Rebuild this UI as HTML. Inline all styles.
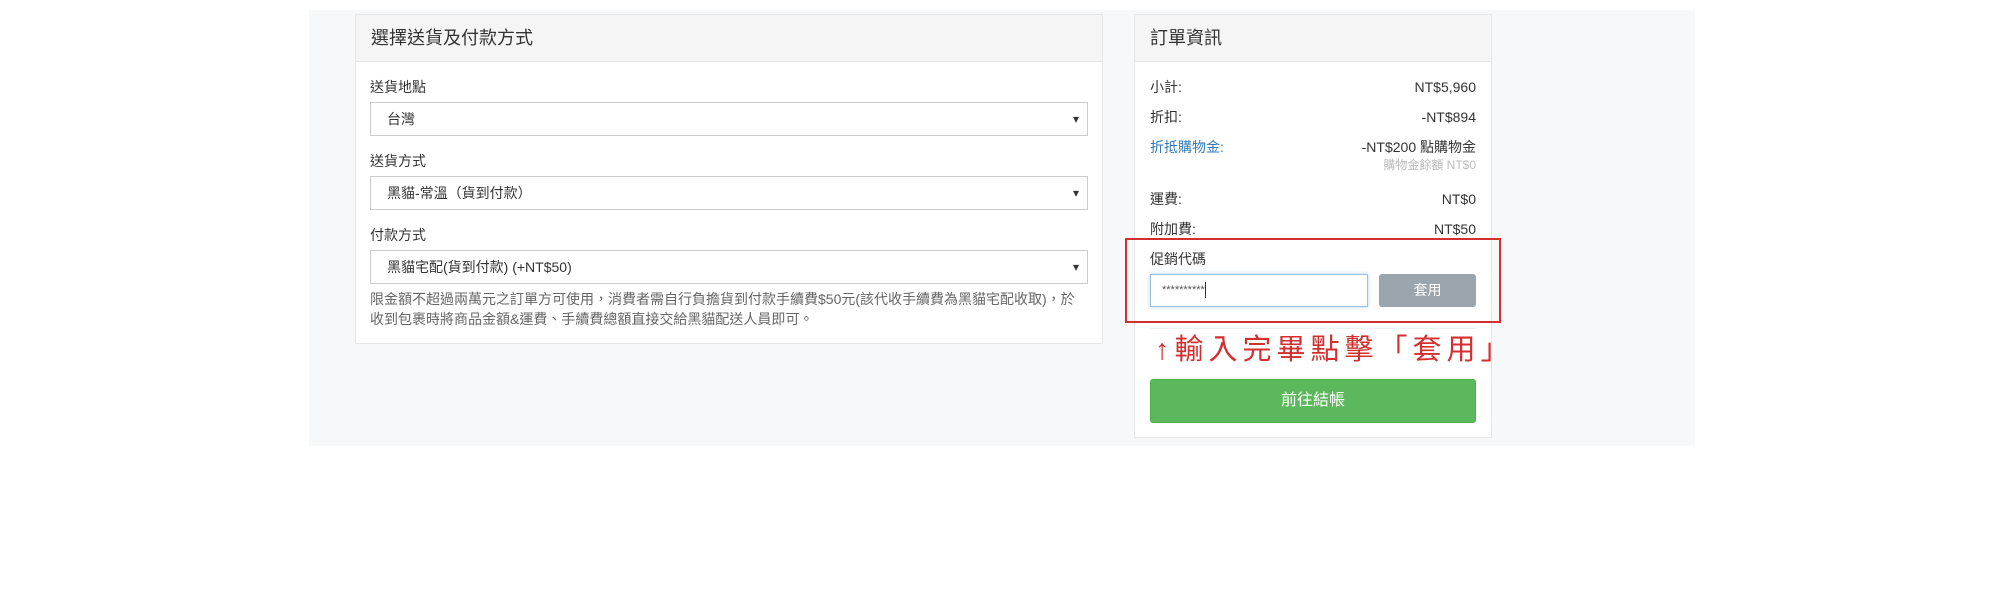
<!DOCTYPE html>
<html><head><meta charset="utf-8"><style>
*{box-sizing:border-box;margin:0;padding:0}
body{width:2000px;height:600px;background:#fff;position:relative;overflow:hidden;font-family:"Liberation Sans","Noto Sans CJK TC",sans-serif;color:#333;font-size:14px}
.a{position:absolute}
.bg{left:309px;top:10px;width:1386px;height:436px;background:#f7f8fa}
.panel{background:#fff;border:1px solid #e6e6e6}
.hd{position:absolute;left:0;top:0;right:0;height:47px;background:#f5f5f5;border-bottom:1px solid #e6e6e6;font-size:18px;padding-left:15px;line-height:46px}
.lbl{font-size:14px;line-height:20px}
.sel{border:1px solid #ccc;height:34px;width:718px;left:370px;background:#fff;font-size:14px;line-height:32px;padding-left:16px}
.sel:after{content:"▾";position:absolute;right:8px;top:0;font-size:12px;color:#333}
.row{left:1150px;width:326px;font-size:14px;line-height:20px}
.row span{float:right}
</style></head><body>
<div class="a bg"></div>
<div class="a panel" style="left:355px;top:14px;width:748px;height:330px">
 <div class="hd">選擇送貨及付款方式</div>
</div>
<div class="a lbl" style="left:370px;top:77px">送貨地點</div>
<div class="a sel" style="top:102px">台灣</div>
<div class="a lbl" style="left:370px;top:151px">送貨方式</div>
<div class="a sel" style="top:176px">黑貓-常溫（貨到付款）</div>
<div class="a lbl" style="left:370px;top:225px">付款方式</div>
<div class="a sel" style="top:250px">黑貓宅配(貨到付款) (+NT$50)</div>
<div class="a" style="left:370px;top:289px;width:712px;line-height:20px;color:#666;font-size:14px">限金額不超過兩萬元之訂單方可使用，消費者需自行負擔貨到付款手續費$50元(該代收手續費為黑貓宅配收取)，於收到包裹時將商品金額&amp;運費、手續費總額直接交給黑貓配送人員即可。</div>

<div class="a panel" style="left:1134px;top:14px;width:358px;height:424px">
 <div class="hd">訂單資訊</div>
</div>
<div class="a row" style="top:77px">小計:<span>NT$5,960</span></div>
<div class="a row" style="top:107px">折扣:<span>-NT$894</span></div>
<div class="a row" style="top:137px;color:#337ab7">折抵購物金:<span style="color:#333">-NT$200 點購物金</span></div>
<div class="a row" style="top:157px;font-size:12px;color:#bbb;line-height:16px"><span>購物金餘額 NT$0</span></div>
<div class="a row" style="top:189px">運費:<span>NT$0</span></div>
<div class="a row" style="top:219px">附加費:<span>NT$50</span></div>
<div class="a" style="left:1125px;top:238px;width:376px;height:85px;border:2px solid #d32f2f"></div>
<div class="a lbl" style="left:1150px;top:249px">促銷代碼</div>
<div class="a" style="left:1150px;top:274px;width:218px;height:33px;border:1px solid #9fbfe0;box-shadow:0 0 4px rgba(102,175,233,.5);background:#fff;font-size:11px;line-height:31px;padding-left:11px;color:#555">**********<span style="display:inline-block;width:1px;height:16px;background:#333;vertical-align:middle"></span></div>
<div class="a" style="left:1379px;top:274px;width:97px;height:33px;background:#9ba5ad;border-radius:3px;color:#fff;text-align:center;line-height:33px;font-size:14px">套用</div>
<div class="a" style="left:1150px;top:328px;width:326px;height:1px;background:#eee"></div>
<div class="a" style="left:1155px;top:332px;font-size:29px;color:#d32f2f;letter-spacing:5px;line-height:36px;white-space:nowrap">↑輸入完畢點擊「套用」</div>
<div class="a" style="left:1150px;top:379px;width:326px;height:44px;background:#5cb85c;border:1px solid #4cae4c;border-radius:3px;color:#fff;text-align:center;line-height:42px;font-size:16px">前往結帳</div>
</body></html>
